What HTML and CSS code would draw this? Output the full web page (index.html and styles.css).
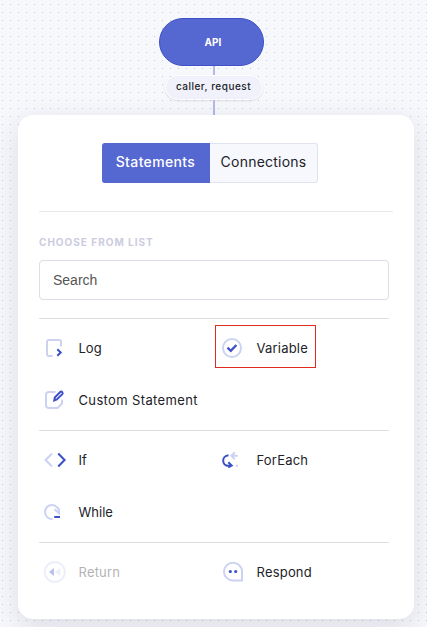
FILE: index.html
```html
<!DOCTYPE html>
<html lang="en">
<head>
<meta charset="utf-8">
<title>API statements</title>
<link rel="stylesheet" href="styles.css">
</head>
<body>
<main class="canvas">
  <div class="start-node"><span>API</span></div>
  <div class="connector"></div>
  <div class="params"><span class="t-params">caller, request</span></div>
  <div class="connector connector-end"></div>
  <section class="panel">
    <div class="tabs">
      <button class="tab tab-active">Statements</button>
      <button class="tab">Connections</button>
    </div>
    <div class="list">
      <h2 class="heading">CHOOSE FROM LIST</h2>
      <div class="search">Search</div>
      <div class="group">
        <div class="item">
          <svg class="icon" viewBox="0 0 24 24" fill="none" stroke-width="2"><path class="soft" d="M10.500 20H7Q5 20 5 18V6Q5 4 7 4H17Q19 4 19 6V10.500"/><path class="strong" d="M15.300 13.300L18.700 16.500L15.300 19.700"/></svg>
          <span>Log</span>
        </div>
        <div class="item item-marked">
          <svg class="icon" viewBox="0 0 24 24" fill="none" stroke-width="2"><circle class="soft" cx="12" cy="12" r="9"/><path class="strong" stroke-width="2.300" d="M7.500 11.700L10.800 14.800L16.400 9"/></svg>
          <span class="t-wide">Variable</span>
        </div>
        <div class="item">
          <svg class="icon" viewBox="0 0 24 24" fill="none" stroke-width="2"><path class="soft" d="M13.500 4H7Q4 4 4 7V17Q4 20 7 20H15.500L20 15.500V11.500"/><path class="strong" d="M12.300 12.400L12.800 9.500L18.200 4.100Q19.200 3.200 20.200 4.100Q21.200 5.100 20.300 6.100L14.900 11.500L12.300 12.400Z"/></svg>
          <span class="t-custom">Custom Statement</span>
        </div>
      </div>
      <div class="group">
        <div class="item">
          <svg class="icon" viewBox="0 0 24 24" fill="none" stroke-width="2.100"><path class="soft" d="M10 5.600L3.600 12L10 18.400"/><path class="strong" d="M16.200 5.600L22.600 12L16.200 18.400"/></svg>
          <span>If</span>
        </div>
        <div class="item">
          <svg class="icon" viewBox="0 0 24 24" fill="none" stroke-width="2"><path class="strong" d="M8.500 7.300C1.300 7.800 1.500 17.800 8.500 17.800H11M8.300 14.300L11.700 17.600L8.300 19.500"/><path class="soft" d="M17.800 7.800H12M14.800 4.300L11.400 7.800L14.800 11.300M15.800 17.800H18"/></svg>
          <span class="t-wide">ForEach</span>
        </div>
        <div class="item">
          <svg class="icon" viewBox="0 0 24 24" fill="none" stroke-width="2"><path class="soft" d="M10.500 19A7 7 0 1 1 17 12.500M12.500 9.300L17 13.300V8.500"/><path class="strong" d="M12.200 17H18"/></svg>
          <span>While</span>
        </div>
      </div>
      <div class="group">
        <div class="item item-disabled">
          <svg class="icon" viewBox="0 0 24 24" fill="none" stroke-width="2"><circle class="soft" cx="12.800" cy="12" r="10"/><path class="fill-strong" d="M7 12L12 8V16Z"/><path class="fill-soft" d="M13 12L18.300 8V16Z"/></svg>
          <span class="t-wide">Return</span>
        </div>
        <div class="item">
          <svg class="icon" viewBox="0 0 24 24" fill="none" stroke-width="2"><path class="soft" d="M13 20.500A9 8.900 0 1 1 22 11.500V20.500Z"/><circle class="fill-strong" cx="10.300" cy="11.500" r="1.600"/><circle class="fill-strong" cx="15.700" cy="11.500" r="1.600"/></svg>
          <span class="t-wide">Respond</span>
        </div>
      </div>
    </div>
  </section>
</main>
</body>
</html>
```
FILE: styles.css
```css
* { box-sizing: border-box; }
body { margin: 0; font-family: Inter, sans-serif; color: #222228; }
.canvas {
  height: 627px;
  overflow: hidden;
  padding-top: 18px;
  display: flex;
  flex-direction: column;
  align-items: center;
  background: radial-gradient(circle at 2.5px 4.5px, #c6c7d0 0, #c6c7d0 .6px, transparent 1px) 0 0 / 8px 8px, #f7f8fc;
}
.start-node {
  flex: none;
  width: 105px;
  height: 48px;
  margin-right: 5px;
  border: 1px solid #3e50ca;
  border-radius: 24px;
  background: #5567d0;
  color: #fff;
  font-size: 10px;
  font-weight: 700;
  display: flex;
  align-items: center;
  justify-content: center;
  padding-left: 4px;
}
.connector { flex: none; width: 2px; height: 9px; background: #b4b9e5; }
.connector-end { height: 15px; }
.params {
  flex: none;
  width: 98px;
  height: 25px;
  border: 1px solid #fff;
  border-radius: 13px;
  background: #f0f1fb;
  box-shadow: 0 1px 2px rgba(80, 85, 120, .15);
  font-size: 10px;
  font-weight: 500;
  display: flex;
  align-items: center;
  justify-content: center;
  padding-bottom: 3px;
}
.t-params { letter-spacing: .5px; }
.panel {
  flex: none;
  width: 396px;
  height: 504px;
  position: relative;
  align-self: flex-start;
  margin-left: 18px;
  border-radius: 15px;
  background: #fff;
  box-shadow: 0 8px 28px rgba(35, 38, 70, .13);
  padding: 28px 21px 0;
}
.tabs { display: flex; width: 216px; height: 40px; margin-left: 63px; }
.tab {
  width: 108px;
  padding: 0 0 3px;
  border: 1px solid #e0e3ee;
  border-left: 0;
  border-radius: 0 3px 3px 0;
  background: #f7f8fd;
  color: inherit;
  font: 14px Inter, sans-serif;
  letter-spacing: .22px;
  white-space: nowrap;
}
.tab-active { border-color: #5567d0; border-radius: 3px 0 0 3px; background: #5567d0; color: #fff; font-weight: 500; letter-spacing: .36px; }
.list { margin-top: 28px; border-top: 1px solid #e6e7eb; padding-top: 24px; }
.heading { margin: 0 0 12px; height: 12px; font-size: 10px; line-height: 12px; font-weight: 700; letter-spacing: 1px; color: #cbcce0; }
.search {
  width: 350px;
  height: 40px;
  margin-bottom: 18px;
  padding-left: 13px;
  border: 1px solid #dcdde5;
  border-radius: 4px;
  font: 14px/38px "Liberation Sans", sans-serif;
  color: #555;
}
.group {
  width: 350px;
  height: 112px;
  border-top: 1px solid #dedee1;
  padding-top: 7px;
  display: grid;
  grid-template-columns: 178px 140px;
  grid-auto-rows: 43px;
  row-gap: 9px;
}
.item { display: flex; align-items: center; padding-left: 3px; font-size: 13px; white-space: nowrap; }
.item-marked { width: 101px; margin: -1px 0 1px -2px; padding: 2px 0 0 4px; border: 1px solid #e02b20; }
.item-disabled { opacity: .35; }
.icon { width: 24px; height: 24px; margin-right: 12.500px; flex: none; }
.t-wide { letter-spacing: .2px; }
.t-custom { letter-spacing: .36px; }
.soft { stroke: #cdd2f2; }
.strong { stroke: #3d50c9; }
.fill-soft { fill: #cdd2f2; }
.fill-strong { fill: #3d50c9; }
```
